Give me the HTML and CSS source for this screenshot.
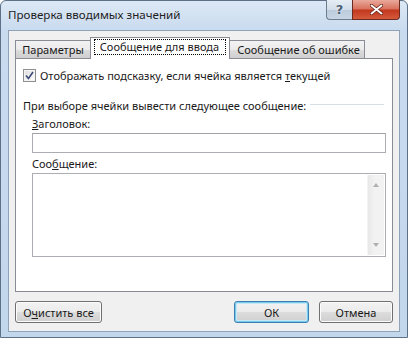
FILE: index.html
```html
<!DOCTYPE html>
<html>
<head>
<meta charset="utf-8">
<link rel="stylesheet" href="styles.css">
</head>
<body>
<div class="window">
  <div class="titlebar">
    <span class="title">Проверка вводимых значений</span>
    <div class="caption-buttons">
      <div class="cap-btn help">?</div>
      <div class="cap-btn close">
        <svg width="13" height="11" viewBox="0 0 13 11"><path d="M1.5 1.5 L11.5 9.5 M11.5 1.5 L1.5 9.5" stroke="#5a1a10" stroke-width="3.4" stroke-linecap="round"/><path d="M1.5 1.5 L11.5 9.5 M11.5 1.5 L1.5 9.5" stroke="#fff" stroke-width="2" stroke-linecap="round"/></svg>
      </div>
    </div>
  </div>
  <div class="client">
    <div class="tabs">
      <div class="tab first">Параметры</div>
      <div class="tab active"><span class="focus">Сообщение для ввода</span></div>
      <div class="tab last">Сообщение об ошибке</div>
    </div>
    <div class="panel">
      <label class="check-row">
        <span class="checkbox">
          <svg width="9" height="9" viewBox="0 0 9 9"><path d="M1 4.5 L3.5 7.5 L8 1" fill="none" stroke="#3b4a75" stroke-width="1.6"/></svg>
        </span>
        <span>Отображать подсказку, если ячейка является <u>т</u>екущей</span>
      </label>
      <div class="group-title"><span>При выборе ячейки вывести следующее сообщение:</span><span class="rule"></span></div>
      <div class="field-label first-label"><u>З</u>аголовок:</div>
      <div class="input"></div>
      <div class="field-label second-label">Соо<u>б</u>щение:</div>
      <div class="textarea">
        <div class="scroll">
          <div class="arrow up"></div>
          <div class="arrow down"></div>
        </div>
      </div>
    </div>
    <div class="buttons">
      <div class="btn clear">О<u>ч</u>истить все</div>
      <div class="spacer"></div>
      <div class="btn default">ОК</div>
      <div class="btn">Отмена</div>
    </div>
  </div>
</div>
</body>
</html>
```
FILE: styles.css
```css
* { box-sizing: border-box; }
html, body { margin: 0; padding: 0; }
body {
  width: 408px;
  height: 338px;
  overflow: hidden;
  font-family: "Noto Sans", "Open Sans", sans-serif;
  font-size: 11px;
  color: #1a1a1a;
  background: #fff;
}
.window {
  width: 408px;
  height: 338px;
  background: linear-gradient(180deg, #dce8f5 0px, #c9dbef 30px, #c2d6ec 100%);
  border: 1px solid #5d7088;
  border-radius: 6px 6px 0 0;
  padding: 0 7px 5px 7px;
  display: flex;
  flex-direction: column;
}
.titlebar {
  height: 29px;
  display: flex;
  align-items: flex-start;
  flex-shrink: 0;
}
.title {
  padding-top: 6px;
  font-size: 11.6px;
  color: #1e1e1e;
  white-space: nowrap;
}
.caption-buttons {
  margin-left: auto;
  display: flex;
  margin-top: -1px;
}
.cap-btn {
  height: 20px;
  display: flex;
  align-items: center;
  justify-content: center;
  border: 1px solid #6b7c8f;
  border-top: none;
}
.help {
  width: 26px;
  border-radius: 0 0 0 4px;
  border-right: none;
  background: linear-gradient(180deg, #e6edf5 0%, #d2dde9 50%, #bccbdc 51%, #c7d5e4 100%);
  color: #4b5f77;
  font-family: "DejaVu Sans", sans-serif;
  font-size: 13px;
  font-weight: bold;
  text-shadow: 0 0 2px #fff;
}
.close {
  width: 48px;
  border-radius: 0 0 4px 0;
  border-color: #6a2a20;
  background: linear-gradient(180deg, #e9aa9d 0%, #d9735f 45%, #c3391f 55%, #d55a3c 100%);
}
.client {
  flex: 1;
  background: #f0f0f0;
  border: 1px solid #8ea2b8;
  padding: 6px 6px 0 6px;
  display: flex;
  flex-direction: column;
}
.tabs {
  display: flex;
  align-items: flex-end;
  height: 21px;
  position: relative;
  z-index: 1;
}
.tab {
  height: 18px;
  border: 1px solid #898c95;
  border-bottom: none;
  background: linear-gradient(180deg, #f2f2f2 0%, #ebebeb 50%, #dddddd 51%, #cfcfcf 100%);
  display: flex;
  align-items: center;
  justify-content: center;
  white-space: nowrap;
  padding-bottom: 1px;
}
.tab.first { width: 76px; }
.tab.active {
  width: 140px;
  height: 22px;
  margin-left: -1px;
  margin-bottom: -1px;
  background: #fff;
  position: relative;
  z-index: 2;
  padding-bottom: 3px;
}
.focus {
  border: 1px dotted #000;
  padding: 0 6px 0 5px;
  line-height: 14px;
}
.tab.last { width: 136px; margin-left: -1px; padding-left: 3px; }
.panel {
  height: 234px;
  width: 378px;
  background: #fff;
  border: 1px solid #898c95;
  padding: 9px 7px 0 7px;
  display: flex;
  flex-direction: column;
}
.check-row {
  display: flex;
  align-items: center;
  height: 14px;
  gap: 4px;
}
.checkbox {
  width: 13px;
  height: 13px;
  border: 1px solid #8e8f8f;
  background: linear-gradient(135deg, #dcdcdc 0%, #ffffff 100%);
  display: flex;
  align-items: center;
  justify-content: center;
  box-shadow: inset 0 0 0 1px #f4f4f4;
}
.group-title {
  display: flex;
  align-items: center;
  margin-top: 16px;
  height: 14px;
  gap: 4px;
}
.rule {
  flex: 1;
  height: 2px;
  border-top: 1px solid #d5dfe5;
  border-bottom: 1px solid #fff;
  margin-right: 1px;
}
.field-label {
  margin-left: 9px;
  height: 14px;
  line-height: 14px;
}
.first-label { margin-top: 5px; }
.second-label { margin-top: 4px; }
.input {
  margin-left: 9px;
  margin-top: 2px;
  width: 354px;
  height: 20px;
  border: 1px solid #abadb3;
  border-top-color: #a0a2a8;
  background: #fff;
}
.textarea {
  margin-left: 9px;
  margin-top: 2px;
  width: 354px;
  height: 84px;
  border: 1px solid #abadb3;
  background: #fff;
  display: flex;
  justify-content: flex-end;
  padding: 1px;
}
.scroll {
  width: 17px;
  height: 100%;
  background: linear-gradient(90deg, #e8e8e8, #f2f2f2 40%, #f2f2f2);
  border-left: 1px solid #f4f4f4;
  display: flex;
  flex-direction: column;
  justify-content: space-between;
  align-items: center;
  padding: 8px 0 8px 0;
}
.arrow {
  width: 0;
  height: 0;
  border-left: 3.5px solid transparent;
  border-right: 3.5px solid transparent;
}
.arrow.up { border-bottom: 4px solid #b0b0b0; }
.arrow.down { border-top: 4px solid #b0b0b0; }
.buttons {
  display: flex;
  margin-top: 9px;
  gap: 9px;
}
.spacer { flex: 1; }
.btn {
  height: 22px;
  width: 74px;
  border: 1px solid #707070;
  border-radius: 3px;
  background: linear-gradient(180deg, #f2f2f2 0%, #ebebeb 50%, #dddddd 51%, #cfcfcf 100%);
  box-shadow: inset 0 0 0 1px #fcfcfc;
  display: flex;
  align-items: center;
  justify-content: center;
  white-space: nowrap;
}
.btn.clear { width: 87px; }
.btn.default {
  width: 75px;
  border-color: #3c7fb1;
  box-shadow: inset 0 0 0 1px #78cbe9, inset 0 0 0 2px #c7e7f7;
  margin-right: 1px;
}
```
